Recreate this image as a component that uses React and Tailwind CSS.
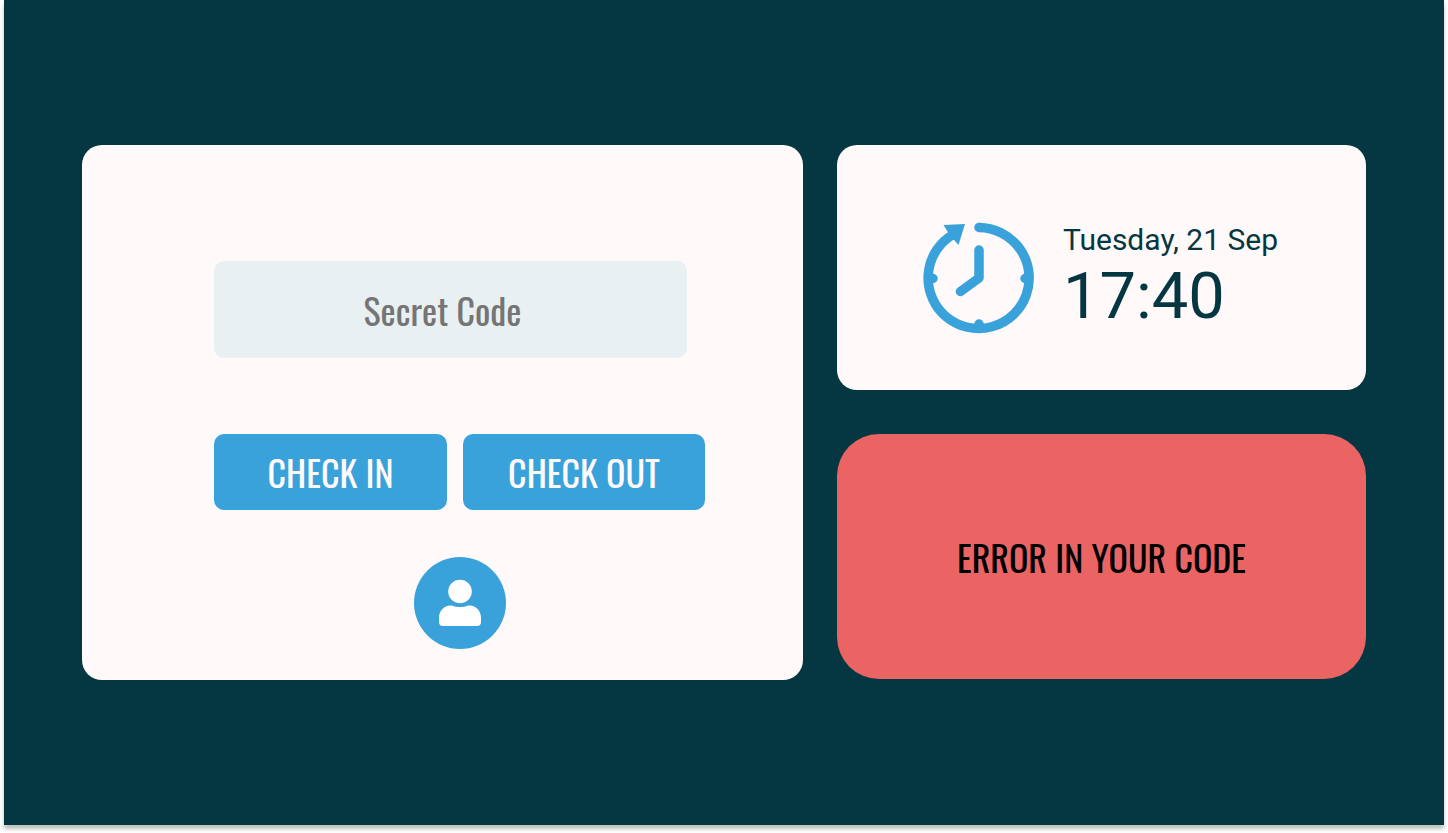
import React, { useState } from "react";

function ClockIcon() {
  return (
    <svg viewBox="0 0 112 112" className="h-28 w-28 shrink-0" fill="none" stroke="#39a2db" aria-hidden="true">
      <path d="M56 5.500A50.500 50.500 0 1 1 30 12.500" strokeWidth="9.500" />
      <path d="M56 5.500h.01" strokeWidth="9.500" strokeLinecap="round" />
      <path d="M20.500 3L42 2l-6.500 21-4-4.500-7-9z" fill="#39a2db" stroke="none" />
      <path d="M56 28V56L37.500 69.500" strokeWidth="9.500" strokeLinecap="round" strokeLinejoin="round" />
      <path d="M10 56.500v.01M102 56.500v.01M56 102v.01" strokeWidth="9.500" strokeLinecap="round" />
    </svg>
  );
}

function UserIcon() {
  return (
    <svg viewBox="0 0 92 92" className="h-full w-full" fill="#fff" aria-hidden="true">
      <circle cx="46" cy="34.500" r="11.800" />
      <path d="M37.500 48.500Q46 51.500 54.500 48.500C62 48 67 54 67 60.500V65Q67 69 63 69H29Q25 69 25 65V60.500C25 54 30 48 37.500 48.500Z" />
    </svg>
  );
}

const condensed = "font-['Oswald','Liberation_Sans_Narrow',sans-serif]";
const action = "flex h-[76px] items-center justify-center rounded-[10px] bg-[#39a2db] text-[36px] leading-10 text-[#fff9f9]";

export default function App() {
  const [code, setCode] = useState("");
  return (
    <div className="flex min-h-screen bg-white px-1 pb-2">
      <main className="flex flex-1 items-center bg-[#053742] px-[78px] py-8 shadow-[0_4px_4px_rgba(0,0,0,0.25)]">
        <div className="grid flex-1 grid-cols-[721fr_529fr] gap-x-[34px]">
          <form
            onSubmit={(e) => e.preventDefault()}
            className={`flex flex-col rounded-[20px] bg-[#fff9f9] pt-[116px] pr-[98px] pb-[31px] pl-[132px] ${condensed}`}
          >
            <input
              type="text"
              aria-label="Secret Code"
              placeholder="Secret Code"
              value={code}
              onChange={(e) => setCode(e.target.value)}
              className="mr-[18px] h-[97px] rounded-[10px] bg-[#e8f0f2] pr-4 text-center text-[36px] leading-10 text-[#053742] placeholder:text-[#757575]"
            />
            <div className="mt-[76px] grid grid-cols-[233fr_242fr] gap-4">
              <button type="button" className={action}>CHECK IN</button>
              <button type="button" className={action}>CHECK OUT</button>
            </div>
            <button type="button" aria-label="User" className="mt-[47px] h-[92px] w-[92px] self-center rounded-full bg-[#39a2db]">
              <UserIcon />
            </button>
          </form>
          <div className="flex flex-col gap-11">
            <section className="flex min-h-[245px] items-center justify-center gap-7 rounded-[20px] bg-[#fff9f9] pt-5 pr-[2px] font-['Roboto',sans-serif] text-[#053742]">
              <ClockIcon />
              <div>
                <p className="text-[30px] leading-9">Tuesday, 21 Sep</p>
                <p className="text-[65px] leading-[76px]">17:40</p>
              </div>
            </section>
            <section
              role="alert"
              className={`flex min-h-[245px] items-center justify-center rounded-[42px] bg-[#eb6464] text-[36px] leading-10 text-black ${condensed}`}
            >
              ERROR IN YOUR CODE
            </section>
          </div>
        </div>
      </main>
    </div>
  );
}
